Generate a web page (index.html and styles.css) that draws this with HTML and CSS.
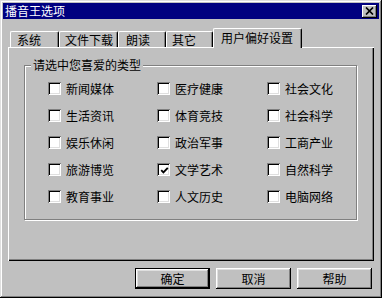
FILE: index.html
```html
<!DOCTYPE html>
<html lang="zh-CN">
<head>
<meta charset="utf-8">
<title>播音王选项</title>
<link rel="stylesheet" href="styles.css">
</head>
<body>
<div class="window">
  <div class="titlebar">
    <span class="title">播音王选项</span>
    <span class="close">
      <svg width="9" height="8" viewBox="0 0 9 8"><path d="M1 0.5 L8 7.5 M8 0.5 L1 7.5" stroke="#000" stroke-width="1.7"/></svg>
    </span>
  </div>
  <div class="body">
    <div class="tabs">
      <div class="tab t1">系统</div>
      <div class="tab t2">文件下载</div>
      <div class="tab t3">朗读</div>
      <div class="tab t4">其它</div>
      <div class="tab active">用户偏好设置</div>
    </div>
    <div class="panel">
      <div class="group">
        <div class="legend">请选中您喜爱的类型</div>
        <div class="grid">
          <div class="item"><span class="cb"></span>新闻媒体</div>
          <div class="item"><span class="cb"></span>医疗健康</div>
          <div class="item"><span class="cb"></span>社会文化</div>
          <div class="item"><span class="cb"></span>生活资讯</div>
          <div class="item"><span class="cb"></span>体育竞技</div>
          <div class="item"><span class="cb"></span>社会科学</div>
          <div class="item"><span class="cb"></span>娱乐休闲</div>
          <div class="item"><span class="cb"></span>政治军事</div>
          <div class="item"><span class="cb"></span>工商产业</div>
          <div class="item"><span class="cb"></span>旅游博览</div>
          <div class="item"><span class="cb"><svg width="9" height="9" viewBox="0 0 9 9"><path d="M1.2 4.2 L3.4 6.4 L7.8 1.8" fill="none" stroke="#000" stroke-width="1.9"/></svg></span>文学艺术</div>
          <div class="item"><span class="cb"></span>自然科学</div>
          <div class="item"><span class="cb"></span>教育事业</div>
          <div class="item"><span class="cb"></span>人文历史</div>
          <div class="item"><span class="cb"></span>电脑网络</div>
        </div>
      </div>
    </div>
    <div class="buttons">
      <div class="btn default"><span>确定</span></div>
      <div class="btn"><span>取消</span></div>
      <div class="btn"><span>帮助</span></div>
    </div>
  </div>
</div>
</body>
</html>
```
FILE: styles.css
```css
html, body {
  margin: 0;
  padding: 0;
  background: #c0c0c0;
}
body {
  font-family: "Noto Sans CJK SC", "Noto Sans", sans-serif;
  font-size: 12px;
  color: #000;
}
.window {
  width: 382px;
  height: 298px;
  box-sizing: border-box;
  padding: 3px;
  background: #c0c0c0;
  box-shadow: inset -1px -1px #000, inset 1px 1px #dfdfdf, inset -2px -2px #808080, inset 2px 2px #fff;
  display: flex;
  flex-direction: column;
}
.titlebar {
  height: 16px;
  background: #000080;
  display: flex;
  align-items: center;
  justify-content: space-between;
  padding: 0 2px 0 2px;
}
.title {
  color: #fff;
  line-height: 16px;
  font-size: 12px;
}
.close {
  width: 15px;
  height: 13px;
  box-sizing: border-box;
  background: #c0c0c0;
  box-shadow: inset -1px -1px #000, inset 1px 1px #fff, inset -2px -2px #808080;
  display: flex;
  align-items: center;
  justify-content: center;
  margin-top: 1px;
}
.close svg { display: block; margin: 0 1px 1px 0; }
.body {
  padding: 9px 5px 0 5px;
  display: flex;
  flex-direction: column;
}
.tabs {
  display: flex;
  align-items: flex-end;
  height: 19px;
  margin-left: 2px;
}
.tab {
  box-sizing: border-box;
  height: 16px;
  border-top: 1px solid #fff;
  border-left: 1px solid #fff;
  border-right: 1px solid #000;
  border-radius: 2px 2px 0 0;
  box-shadow: inset -1px 0 #808080;
  line-height: 14px;
  padding-top: 1px;
  white-space: nowrap;
}
.t1 { width: 49px; padding-left: 6px; }
.t2 { width: 59px; padding-left: 5px; }
.t3 { width: 48px; padding-left: 7px; }
.t4 { width: 47px; padding-left: 5px; }
.tab.active {
  width: 89px;
  height: 20px;
  padding-left: 7px;
  padding-top: 2px;
  margin-bottom: -1px;
  position: relative;
  z-index: 1;
  background: #c0c0c0;
}
.panel {
  width: 366px;
  height: 214px;
  box-sizing: border-box;
  box-shadow: inset 1px 1px #fff, inset -1px -1px #000, inset -2px -2px #808080;
  padding: 18px 0 0 16px;
}
.group {
  width: 333px;
  height: 155px;
  box-sizing: border-box;
  border: 1px solid #808080;
  box-shadow: inset 1px 1px #fff, 1px 1px #fff;
  display: flex;
  flex-direction: column;
}
.legend {
  align-self: flex-start;
  margin: -8px 0 0 6px;
  padding: 0 2px;
  background: #c0c0c0;
  line-height: 14px;
}
.grid {
  margin-top: 3px;
  padding-left: 23px;
  display: grid;
  grid-template-columns: 109px 110px 1fr;
  grid-auto-rows: 27px;
}
.item {
  display: flex;
  align-items: center;
  gap: 5px;
  line-height: 14px;
  white-space: nowrap;
}
.cb {
  width: 13px;
  height: 13px;
  box-sizing: border-box;
  flex: none;
  background: #fff;
  box-shadow: inset 1px 1px #808080, inset -1px -1px #fff, inset 2px 2px #000, inset -2px -2px #dfdfdf;
  display: flex;
  align-items: center;
  justify-content: center;
}
.cb svg { display: block; margin: 1px 0 0 1px; }
.buttons {
  display: flex;
  justify-content: flex-end;
  gap: 6px;
  margin-top: 7px;
  padding-right: 2px;
}
.btn {
  width: 75px;
  height: 21px;
  box-sizing: border-box;
  box-shadow: inset -1px -1px #000, inset 1px 1px #fff, inset -2px -2px #808080, inset 2px 2px #dfdfdf;
  display: flex;
  align-items: center;
  justify-content: center;
  line-height: 14px;
}
.btn.default {
  border: 1px solid #000;
}
```
